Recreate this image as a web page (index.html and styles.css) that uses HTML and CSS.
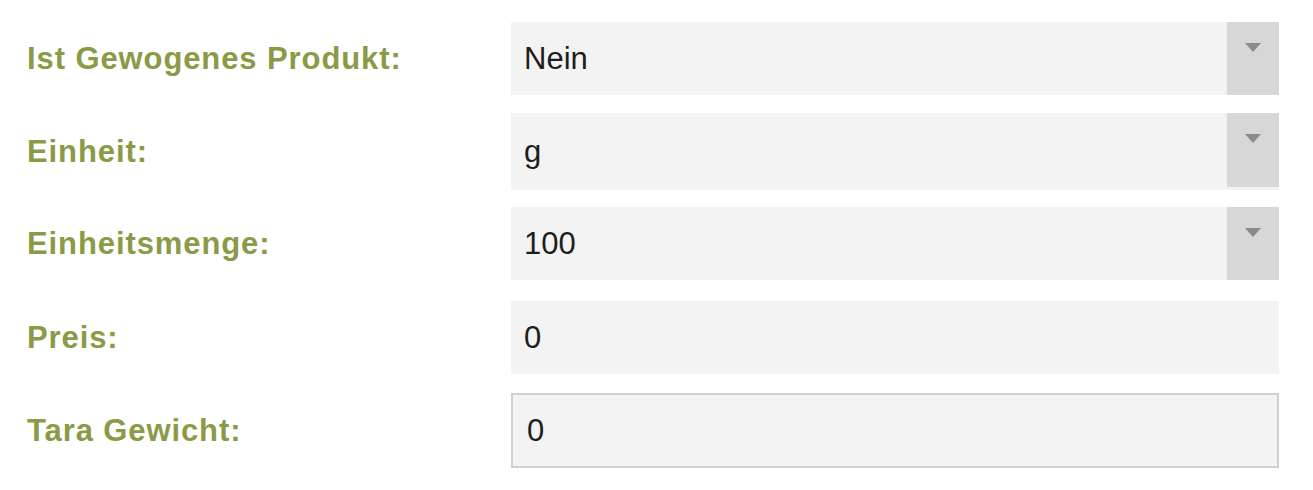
FILE: index.html
```html
<!DOCTYPE html>
<html lang="de">
<head>
  <meta charset="UTF-8">
  <title>Produkt</title>
  <link rel="stylesheet" href="styles.css">
</head>
<body>

<!-- Product form -->
<form id="product-form">
  <div class="form-row row-weighed">
    <label class="form-label">Ist Gewogenes Produkt:</label>
    <div class="field select-field">
      <span class="field-value">Nein</span>
      <span class="select-arrow"></span>
    </div>
  </div>

  <div class="form-row row-unit">
    <label class="form-label">Einheit:</label>
    <div class="field select-field">
      <span class="field-value">g</span>
      <span class="select-arrow"></span>
    </div>
  </div>

  <div class="form-row row-amount">
    <label class="form-label">Einheitsmenge:</label>
    <div class="field select-field">
      <span class="field-value">100</span>
      <span class="select-arrow"></span>
    </div>
  </div>

  <div class="form-row row-price">
    <label class="form-label">Preis:</label>
    <div class="field">
      <span class="field-value">0</span>
    </div>
  </div>

  <div class="form-row row-tara">
    <label class="form-label">Tara Gewicht:</label>
    <div class="field field-focus">
      <span class="field-value">0</span>
    </div>
  </div>
</form>

</body>
</html>
```

FILE: styles.css
```css
body {
  margin: 0;
  padding: 22px 0 0 0;
  background-color: #fff;
  font-family: "Liberation Sans", Arial, sans-serif;
}

#product-form {
  display: flex;
  flex-direction: column;
}

.form-row {
  display: flex;
  align-items: center;
  height: 73px;
}

.row-weighed {
  margin-bottom: 18px;
}

.row-unit {
  height: 77px;
  margin-bottom: 17px;
}

.row-amount {
  margin-bottom: 21px;
}

.row-price {
  margin-bottom: 19px;
}

.row-tara {
  height: 75px;
}

.form-label {
  width: 484px;
  padding-left: 27px;
  font-size: 31px;
  font-weight: bold;
  letter-spacing: 0.9px;
  color: #8b9a46;
}

.field {
  display: flex;
  align-items: center;
  width: 768px;
  height: 100%;
  box-sizing: border-box;
  padding-left: 13px;
  background-color: #f3f3f3;
}

.field-value {
  flex-grow: 1;
  font-size: 31px;
  color: #1e1e1e;
}

.select-field {
  position: relative;
  align-items: stretch;
}

.select-field .field-value {
  display: flex;
  align-items: center;
}

.select-arrow {
  width: 52px;
  background-color: #d7d7d7;
  position: relative;
}

.row-unit .select-arrow {
  height: 74px;
}

.select-arrow::after {
  content: "";
  position: absolute;
  top: 21px;
  left: 18px;
  border-left: 8px solid transparent;
  border-right: 8px solid transparent;
  border-top: 9px solid #8a8a8a;
}

.field-focus {
  border: 2px solid #d0d0d0;
  padding-left: 14px;
}
```
